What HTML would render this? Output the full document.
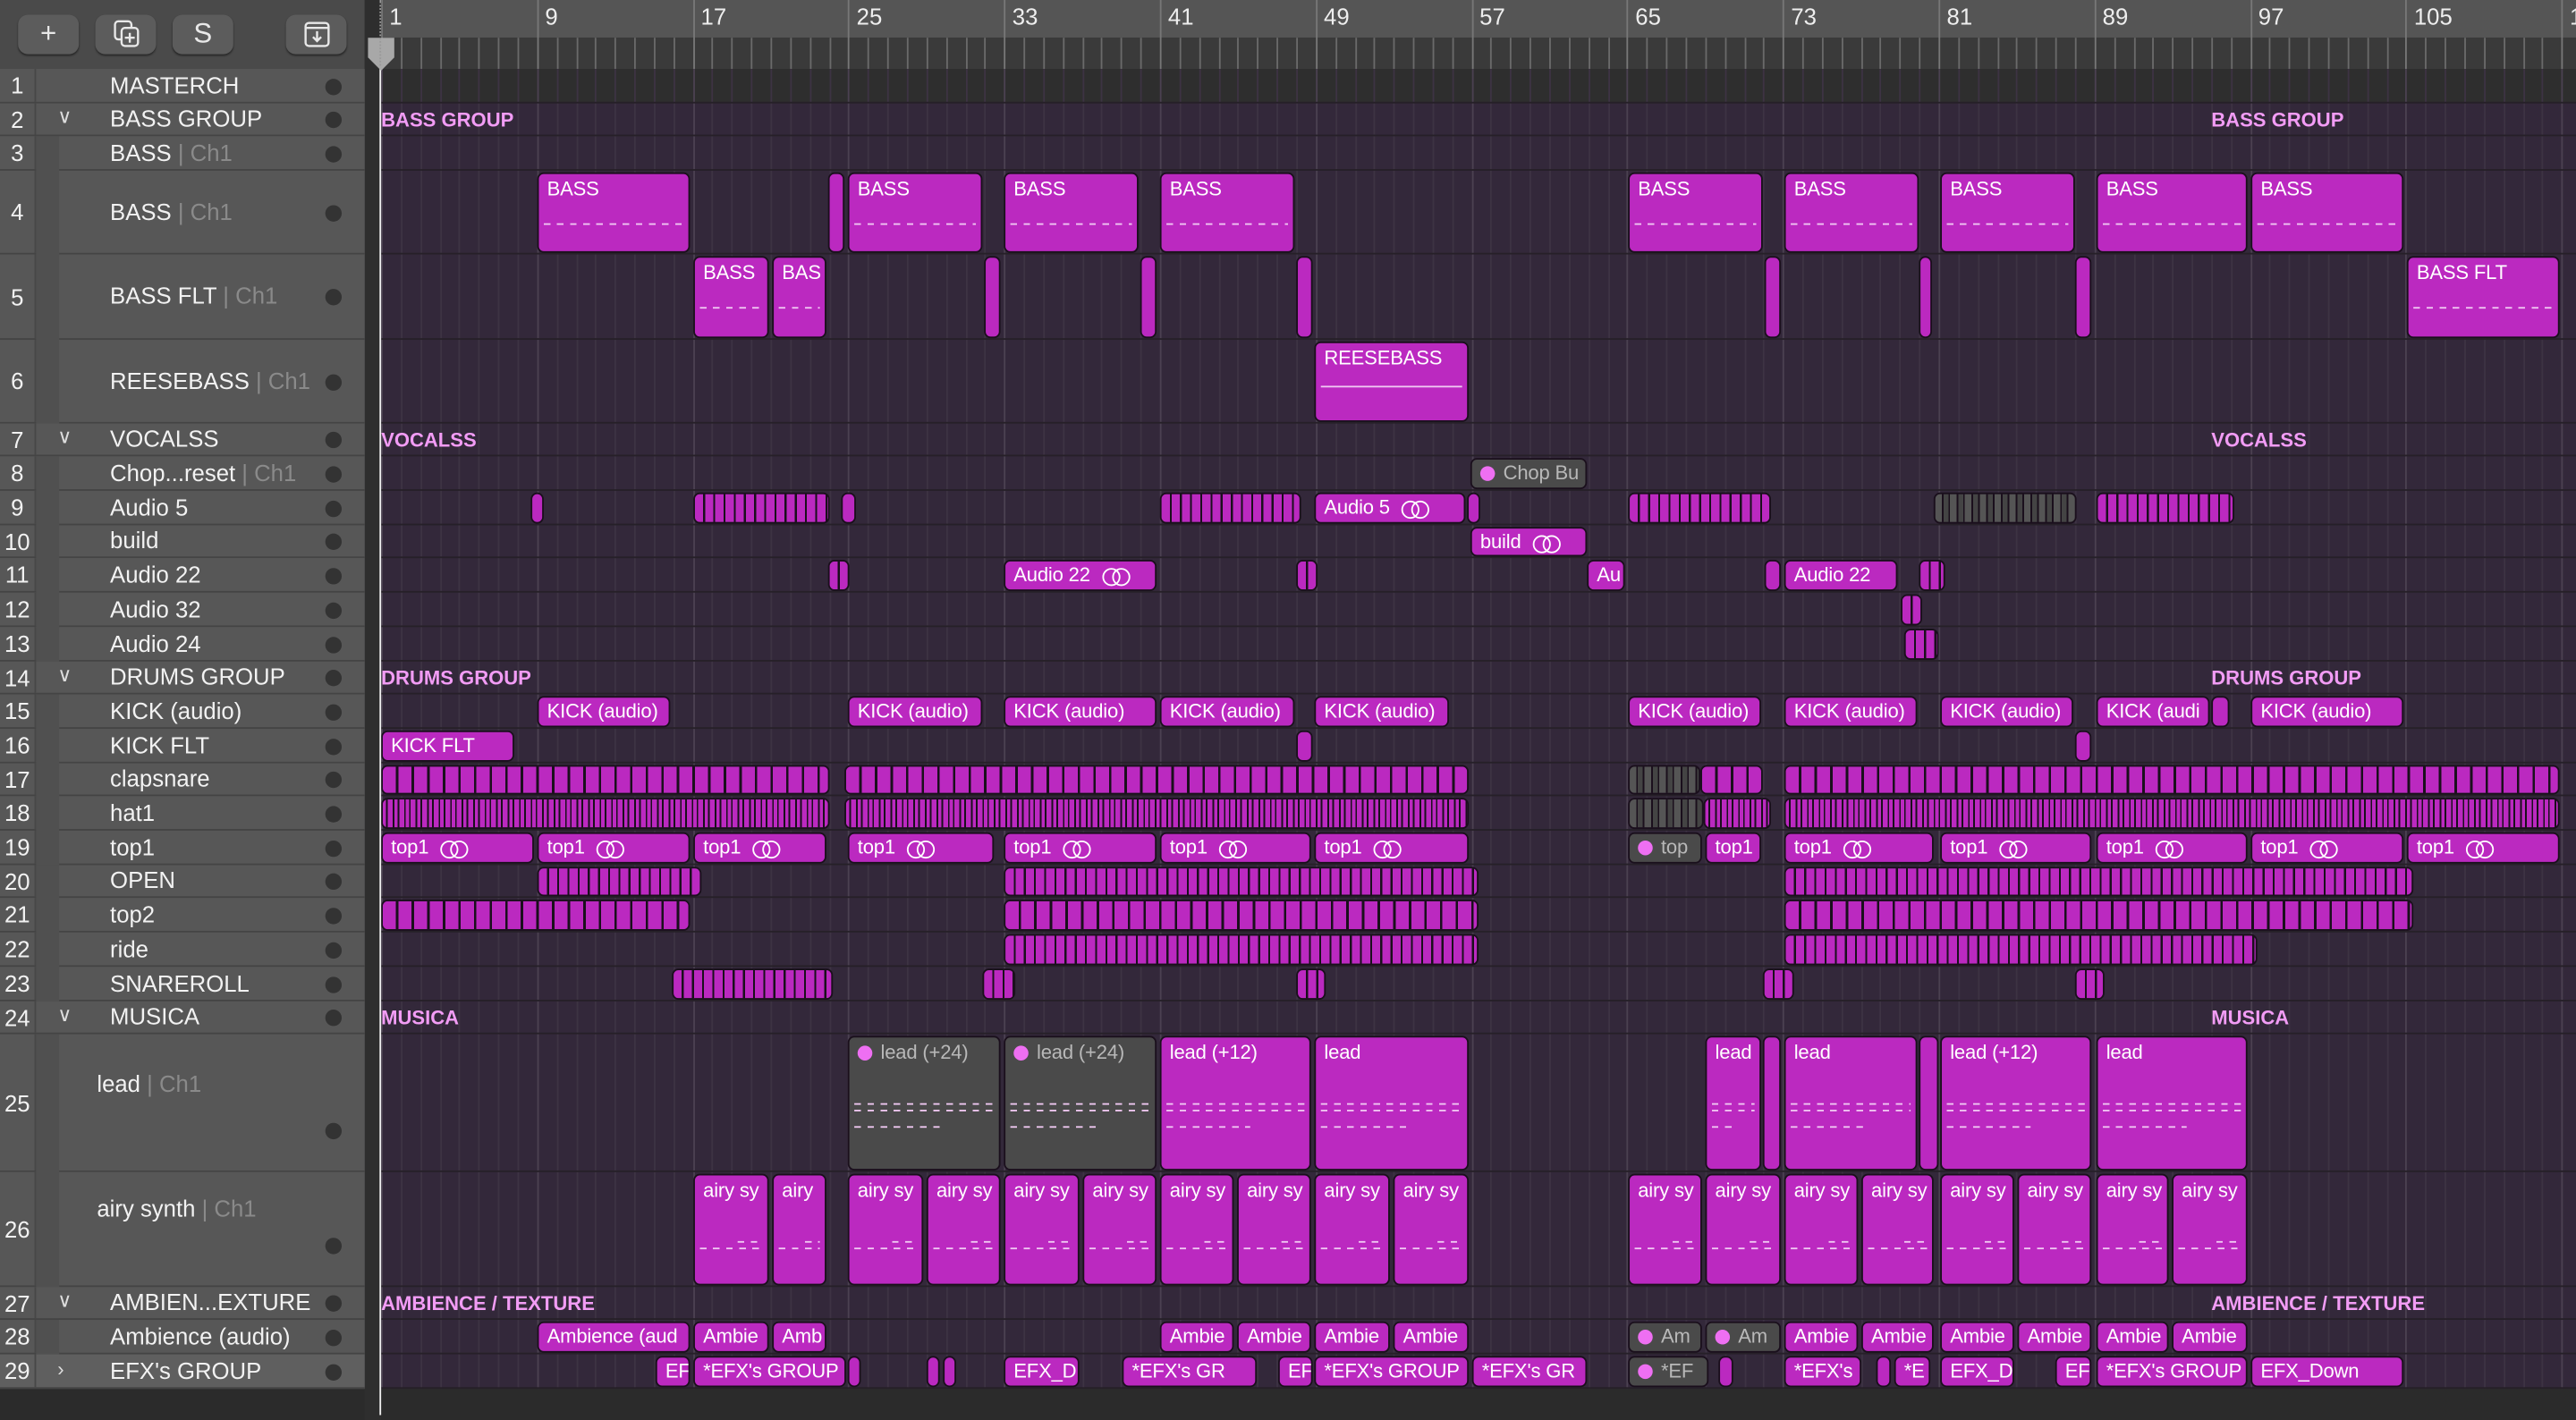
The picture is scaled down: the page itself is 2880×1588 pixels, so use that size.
<!DOCTYPE html>
<html><head><meta charset="utf-8"><style>
*{margin:0;padding:0;box-sizing:border-box}
html,body{width:2880px;height:1588px;overflow:hidden;background:#2b2b2b;font-family:"Liberation Sans",sans-serif}
#s{position:absolute;left:0;top:0;width:1568px;height:865px;transform:scale(1.836735,1.835838);transform-origin:0 0;overflow:hidden;background:#2b2b2b}
.abs{position:absolute}
.btn{position:absolute;top:9px;width:37px;height:24px;background:#5c5c5c;border-radius:6px;box-shadow:0 1px 1px #2a2a2a;color:#e8e8e8;font-size:17px;text-align:center;line-height:24px}
.lrow{position:absolute;left:0;width:222px;background:#575757;border-bottom:1px solid #444;color:#f2f2f2;font-size:14px}
.num{position:absolute;left:0;width:22px;text-align:center;font-size:14px;border-right:1px solid #474747;height:100%}
.dot{position:absolute;left:198px;width:10px;height:10px;border-radius:50%;background:#333}
.ch{color:#8a8a8a}
.g{position:absolute;height:1px;left:222px;right:0;background:#262028}
.reg{position:absolute;background:#bb29c0;border:1px solid #1a0f1c;border-radius:4px;color:#fff;font-size:12px;padding:2px 0 0 5px;white-space:nowrap;overflow:hidden;letter-spacing:-0.1px}
.grey{background:#4a4a4a;color:#b8b8b8}
.gl{position:absolute;left:232px;font-size:12px;font-weight:bold;color:#f29cf5}
.pd{display:inline-block;width:9px;height:9px;border-radius:50%;background:#ee6ff2;margin-right:5px;vertical-align:-1px}
.lp{display:inline-block;width:16px;height:9px;margin-left:7px;vertical-align:-1px;position:relative}
.lp:before,.lp:after{content:"";position:absolute;top:0;width:9px;height:9px;border:1.3px solid #fff;border-radius:50%}
.lp:before{left:0}.lp:after{left:6px}
.dash{position:absolute;left:3px;right:3px;height:1px;background:repeating-linear-gradient(90deg,#f0c8f2 0 4px,transparent 4px 8px)}
</style></head><body><div id="s">
<div class="abs" style="left:0;top:0;width:222px;height:42px;background:#4a4a4a"></div>
<div class="btn" style="left:11px">+</div>
<div class="btn" style="left:58px"><svg width="16" height="18" viewBox="0 0 16 18" style="margin-top:3px"><rect x="1" y="1" width="10" height="11" rx="2" fill="none" stroke="#e8e8e8" stroke-width="1.3"/><rect x="5" y="5" width="10" height="11" rx="2" fill="#5c5c5c" stroke="#e8e8e8" stroke-width="1.3"/><path d="M10 8v6M7 11h6" stroke="#e8e8e8" stroke-width="1.3"/></svg></div>
<div class="btn" style="left:105px">S</div>
<div class="btn" style="left:174px"><svg width="16" height="16" viewBox="0 0 16 16" style="margin-top:4px"><rect x="1" y="1" width="14" height="14" rx="2" fill="none" stroke="#e8e8e8" stroke-width="1.3"/><path d="M1 4h14M8 6v6M5.5 9.5 8 12l2.5-2.5" fill="none" stroke="#e8e8e8" stroke-width="1.3"/></svg></div>
<div class="abs" style="left:222px;top:0;right:0;height:23px;background:#555"></div>
<div class="abs" style="left:222px;top:23px;right:0;height:19px;background:#3a3a3a"></div>
<div class="abs" style="left:222px;top:0;width:10px;height:42px;background:#2e2e2e"></div>
<div id="ruler"></div>
<div class="abs" style="left:222px;top:42px;right:0;height:21px;background:#2e2e2e"></div>
<div class="abs" style="left:222px;top:63px;right:0;height:783px;background:#33283a"></div>
<div class="abs" style="left:0;top:846px;width:1568px;height:19px;background:#2b2b2b"></div>
<div id="grid"></div>
<div id="left"></div>
<div id="regs"></div>
<div class="abs" style="left:231px;top:42px;width:1px;height:820px;background:#eee"></div>
<svg class="abs" style="left:222px;top:22px" width="20" height="22"><path d="M2 1h16v12l-8 8-8-8z" fill="#a8a8a8"/></svg>
<div class="abs" style="left:231px;top:0;width:1px;height:40px;border-left:1px dotted #999"></div>
</div>
<script>
const X=b=>232+(b-1)*11.85;
const H=[0,42,63,83,104,155,207,258,278,299,320,340,361,382,403,423,444,465,485,506,527,547,568,589,610,630,714,784,804,825,846];
let r='';
const nums=[1,9,17,25,33,41,49,57,65,73,81,89,97,105,113];
for(const n of nums){const x=X(n);r+=`<div class="abs" style="left:${x}px;top:0;width:1px;height:42px;background:#777"></div><div class="abs" style="left:${x+5}px;top:2px;color:#eee;font-size:14px">${n}</div>`;}
for(let b=1;b<120;b++){if((b-1)%8)r+=`<div class="abs" style="left:${X(b)}px;top:23px;width:1px;height:19px;background:#6a6a6a"></div>`;}
document.getElementById('ruler').innerHTML=r;
let g='';
for(let b=1;b<120;b++){const x=X(b);g+=`<div class="abs" style="left:${x}px;top:42px;width:1px;height:804px;background:${(b-1)%8?'#3d3343':'#4b4151'}"></div>`;}
for(let i=2;i<H.length;i++)g+=`<div class="g" style="top:${H[i]-1}px"></div>`;
[['BASS GROUP',66],['VOCALSS',261],['DRUMS GROUP',406],['MUSICA',613],['AMBIENCE / TEXTURE',787]].forEach(a=>{g+=`<div class="gl" style="top:${a[1]}px">${a[0]}</div><div class="gl" style="top:${a[1]}px;left:1346px">${a[0]}</div>`;});
document.getElementById('grid').innerHTML=g;
const T=[["MASTERCH"],["BASS GROUP","g"],["BASS","c"],["BASS","c"],["BASS FLT","c"],["REESEBASS","c"],["VOCALSS","g"],["Chop...reset","c"],["Audio 5"],["build"],["Audio 22"],["Audio 32"],["Audio 24"],["DRUMS GROUP","g"],["KICK (audio)"],["KICK FLT"],["clapsnare"],["hat1"],["top1"],["OPEN"],["top2"],["ride"],["SNAREROLL"],["MUSICA","g"],["lead","c"],["airy synth","c"],["AMBIEN...EXTURE","g"],["Ambience (audio)"],["EFX's GROUP","x"]];
let l='<div class="abs" style="left:0;top:42px;width:222px;height:804px;background:#575757"></div><div class="abs" style="left:222px;top:0;width:10px;height:865px;background:#2e2e2e"></div>';
T.forEach((t,i)=>{const top=H[i+1],h=H[i+2]-top;const tall=i==24||i==25;
const ty=tall?(i==24?22:14):(h/2-9);
let lab=t[0]+(t[1]=='c'?' <span class="ch">| Ch1</span>':'');
const grp=t[1]=='g'||t[1]=='x';
const child=!grp&&i>1;
l+=`<div class="lrow" style="top:${top}px;height:${h}px;${i==28?'background:#5f5f5f':''}"><div class="num" style="line-height:${h}px">${i+1}</div>`;
if(grp)l+=`<div class="abs" style="left:35px;top:${h/2-9}px;color:#ddd;font-size:12px">${t[1]=='x'?'&#x203A;':'&#x2228;'}</div>`;
if(child)l+=`<div class="abs" style="left:22px;top:0;width:14px;height:${h+1}px;background:#505050"></div>`;
l+=`<div class="abs" style="left:${tall?59:67}px;top:${ty}px">${lab}</div><div class="dot" style="top:${tall?h-30:h/2-5}px"></div></div>`;});
document.getElementById('left').innerHTML=l;
let R='';
const S1='repeating-linear-gradient(90deg,#bb29c0 0 5px,#1a0f1c 5px 6.2px)';
const S2='repeating-linear-gradient(90deg,#bb29c0 0 2px,#1a0f1c 2px 3px,#bb29c0 3px 6px,#1a0f1c 6px 7px)';
const S3='repeating-linear-gradient(90deg,#bb29c0 0 8px,#1a0f1c 8px 9.5px)';
const SG='repeating-linear-gradient(90deg,#555 0 4px,#1a0f1c 4px 5px,#444 5px 8px,#1a0f1c 8px 9px)';
function rg(row,x1,x2,lab,cls,extra,bg){const top=H[row]+1,h=H[row+1]-H[row]-2;
R+=`<div class="reg ${cls||''}" style="left:${x1}px;top:${top}px;width:${x2-x1}px;height:${h}px;${h<25?'line-height:15px;padding-top:1px;':''}${bg?'background:'+bg+';':''}">${lab||''}${extra||''}</div>`;}
const bassD='<div class="dash" style="top:30px"></div>';
[[327,420],[516,598],[611,693],[706,788],[991,1073],[1086,1168],[1181,1263],[1276,1368],[1370,1463]].forEach(a=>rg(4,a[0],a[1],'BASS','',bassD));
rg(4,504,514,'');
[[422,468,'BASS'],[470,503,'BAS'],[599,609,''],[694,704,''],[789,799,''],[1074,1084,''],[1168,1176,''],[1263,1273,''],[1465,1558,'BASS FLT']].forEach(a=>rg(5,a[0],a[1],a[2],'',a[2]?'<div class="dash" style="top:30px"></div>':''));
rg(6,800,894,'REESEBASS','','<div class="abs" style="left:3px;right:3px;top:26px;height:1px;background:#f0c8f2"></div>');
rg(8,895,966,'<span class="pd"></span>Chop Bu','grey');
rg(9,323,331,'');rg(9,422,505,'','','',S1);rg(9,512,521,'');rg(9,706,792,'','','',S1);rg(9,800,892,'Audio 5','','<span class="lp"></span>');rg(9,893,901,'');rg(9,991,1078,'','','',S1);rg(9,1177,1264,'','','',SG);rg(9,1276,1360,'','','',S1);
rg(10,895,966,'build','','<span class="lp"></span>');
rg(11,504,517,'','','',S1);rg(11,611,704,'Audio 22','','<span class="lp"></span>');rg(11,789,802,'','','',S1);rg(11,966,989,'Au');rg(11,1074,1084,'');rg(11,1086,1155,'Audio 22');rg(11,1168,1184,'','','',S1);
rg(12,1157,1170,'','','',S1);rg(13,1159,1180,'','','',S1);
[[327,408],[516,598],[611,704],[706,788],[800,882],[991,1072],[1086,1167],[1181,1262],[1370,1463]].forEach(a=>rg(15,a[0],a[1],'KICK (audio)'));
rg(15,1276,1345,'KICK (audi');rg(15,1346,1357,'');
rg(16,232,313,'KICK FLT');rg(16,789,799,'');rg(16,1263,1273,'');
[[232,505],[514,894],[1086,1558]].forEach(a=>{rg(17,a[0],a[1],'','','',S3);rg(18,a[0],a[1],'','','',S2);});
rg(17,991,1035,'','','',SG);rg(17,1035,1073,'','','',S3);rg(18,991,1037,'','','',SG);rg(18,1037,1078,'','','',S2);
[[232,325],[327,420],[422,503],[516,605],[611,704],[706,798],[800,894],[1086,1177],[1181,1273],[1276,1368],[1370,1463],[1465,1558]].forEach(a=>rg(19,a[0],a[1],'top1','','<span class="lp"></span>'));
rg(19,991,1036,'<span class="pd"></span>top','grey');rg(19,1038,1072,'top1');
[[327,427],[611,900],[1086,1469]].forEach(a=>rg(20,a[0],a[1],'','','',S1));
[[232,420],[611,900],[1086,1469]].forEach(a=>rg(21,a[0],a[1],'','','',S3));
[[611,900],[1086,1374]].forEach(a=>rg(22,a[0],a[1],'','','',S1));
[[409,507],[598,618],[789,807],[1073,1092],[1263,1281]].forEach(a=>rg(23,a[0],a[1],'','','',S1));
const ld='<div class="dash" style="top:40px"></div><div class="dash" style="top:44px"></div><div class="dash" style="top:54px;right:40%"></div>';
rg(25,516,609,'<span class="pd"></span>lead (+24)','grey',ld);rg(25,611,704,'<span class="pd"></span>lead (+24)','grey',ld);
[[706,798,'lead (+12)'],[800,894,'lead'],[1038,1072,'lead'],[1073,1084,''],[1086,1167,'lead'],[1168,1180,''],[1181,1273,'lead (+12)'],[1276,1368,'lead']].forEach(a=>rg(25,a[0],a[1],a[2],'',a[2]?ld:''));
const ad='<div class="dash" style="top:40px;left:60%"></div><div class="dash" style="top:44px"></div>';
[[422,468,'airy sy'],[470,503,'airy'],[516,562],[564,609],[611,657],[659,704],[706,751],[753,798],[800,846],[848,894],[991,1036],[1038,1084],[1086,1131],[1133,1177],[1181,1226],[1228,1273],[1276,1320],[1322,1368]].forEach(a=>rg(26,a[0],a[1],a[2]||'airy sy','',ad));
rg(28,327,420,'Ambience (aud');rg(28,422,468,'Ambie');rg(28,470,503,'Amb');
[[706,751],[753,798],[800,846],[848,894],[1086,1131],[1133,1177],[1181,1226],[1228,1273],[1276,1320],[1322,1368]].forEach(a=>rg(28,a[0],a[1],'Ambie'));
rg(28,991,1036,'<span class="pd"></span>Am','grey');rg(28,1038,1084,'<span class="pd"></span>Am','grey');
[[399,420,'EF'],[422,515,"*EFX's GROUP"],[516,524,''],[564,572,''],[574,582,''],[611,657,'EFX_D'],[683,765,"*EFX's GR"],[778,799,'EF'],[800,894,"*EFX's GROUP"],[896,966,"*EFX's GR"],[1046,1055,''],[1086,1133,"*EFX's"],[1142,1151,''],[1153,1175,'*E'],[1181,1226,'EFX_D'],[1251,1273,'EF'],[1276,1368,"*EFX's GROUP"],[1370,1463,'EFX_Down']].forEach(a=>rg(29,a[0],a[1],a[2]));
rg(29,991,1040,'<span class="pd"></span>*EF','grey');
document.getElementById('regs').innerHTML=R;
</script>
</body></html>
